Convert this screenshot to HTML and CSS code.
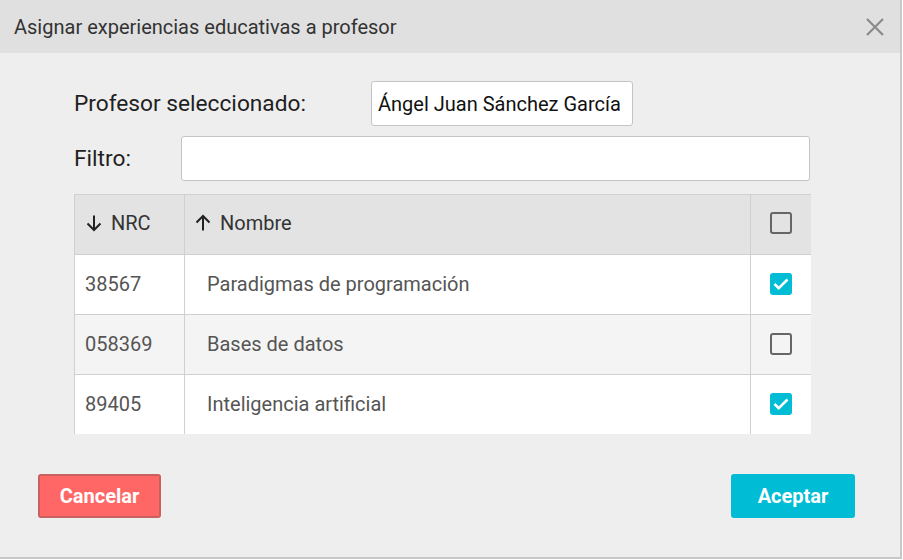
FILE: index.html
```html
<!DOCTYPE html>
<html lang="es">
<head>
<meta charset="utf-8">
<title>Asignar experiencias educativas a profesor</title>
<link rel="stylesheet" href="styles.css">
</head>
<body>
<div class="dialog">
  <div class="titlebar">
    <span class="title">Asignar experiencias educativas a profesor</span>
    <svg class="close" width="20" height="20" viewBox="0 0 20 20"><path d="M2 2 L18 18 M18 2 L2 18" stroke="#8a8a8a" stroke-width="2.2" fill="none"/></svg>
  </div>
  <div class="content">
    <div class="row row-prof">
      <label class="label">Profesor seleccionado:</label>
      <div class="input input-prof">Ángel Juan Sánchez García</div>
    </div>
    <div class="row row-filter">
      <label class="label">Filtro:</label>
      <div class="input input-filter"></div>
    </div>
    <div class="table">
      <div class="tr thead">
        <div class="td c-nrc"><svg class="arrow" width="18" height="18" viewBox="0 0 18 18"><path d="M9 1.5 V16 M2.5 9.5 L9 16 L15.5 9.5" stroke="#222" stroke-width="2" fill="none"/></svg>NRC</div>
        <div class="td c-name"><svg class="arrow" width="18" height="18" viewBox="0 0 18 18"><path d="M9 16.5 V2 M2.5 8.5 L9 2 L15.5 8.5" stroke="#222" stroke-width="2" fill="none"/></svg>Nombre</div>
        <div class="td c-chk"><span class="cb"></span></div>
      </div>
      <div class="tr">
        <div class="td c-nrc">38567</div>
        <div class="td c-name pad">Paradigmas de programación</div>
        <div class="td c-chk"><span class="cb on"><svg width="22" height="22" viewBox="0 0 22 22"><path d="M4.5 11 L8.7 15.2 L17.5 6.5" stroke="#fff" stroke-width="2.6" fill="none"/></svg></span></div>
      </div>
      <div class="tr alt">
        <div class="td c-nrc">058369</div>
        <div class="td c-name pad">Bases de datos</div>
        <div class="td c-chk"><span class="cb"></span></div>
      </div>
      <div class="tr">
        <div class="td c-nrc">89405</div>
        <div class="td c-name pad">Inteligencia artificial</div>
        <div class="td c-chk"><span class="cb on"><svg width="22" height="22" viewBox="0 0 22 22"><path d="M4.5 11 L8.7 15.2 L17.5 6.5" stroke="#fff" stroke-width="2.6" fill="none"/></svg></span></div>
      </div>
    </div>
  </div>
  <div class="footer">
    <button class="btn btn-cancel">Cancelar</button>
    <button class="btn btn-ok">Aceptar</button>
  </div>
</div>
</body>
</html>
```
FILE: styles.css
```css
* { box-sizing: border-box; }
html, body { margin: 0; padding: 0; background: #ffffff; }
body { font-family: Roboto, "Liberation Sans", sans-serif; }

.dialog {
  width: 902px;
  height: 559px;
  background: #eeeeee;
  border-right: 2px solid #c8c8c8;
  border-bottom: 2px solid #c8c8c8;
  display: flex;
  flex-direction: column;
}

.titlebar {
  height: 53px;
  background: #e0e0e0;
  display: flex;
  align-items: center;
  justify-content: space-between;
  padding: 0 15px 0 14px;
}
.title { font-size: 20px; color: #333333; }
.close { display: block; }

.content {
  padding: 28px 90px 0 74px;
  display: flex;
  flex-direction: column;
}
.row { display: flex; align-items: center; }
.row-prof { height: 45px; }
.row-filter { height: 45px; margin-top: 10px; }
.label { font-size: 22.7px; color: #1f1f1f; }
.row-prof .label { width: 297px; }
.row-filter .label { width: 107px; }
.input {
  height: 45px;
  background: #ffffff;
  border: 1px solid #c4c4c4;
  border-radius: 3px;
  font-size: 20px;
  color: #111;
  display: flex;
  align-items: center;
  padding: 0 6px;
}
.input-prof { width: 262px; }
.input-filter { flex: 1; }

.table {
  margin-top: 13px;
  border-left: 1px solid #d0d0d0;
  border-top: 1px solid #d0d0d0;
  width: 737px;
}
.tr { display: flex; height: 60px; background: #ffffff; border-bottom: 1px solid #d0d0d0; }
.tr:last-child { border-bottom: 0; height: 59px; }
.tr.alt { background: #f4f4f4; }
.thead { background: #e3e3e3; height: 60px; }
.td { display: flex; align-items: center; font-size: 20px; color: #555555; padding-bottom: 2px; }
.thead .td { color: #333333; padding-bottom: 3px; }
.c-nrc { width: 110px; padding-left: 10px; border-right: 1px solid #d0d0d0; }
.c-name { width: 566px; padding-left: 9px; border-right: 1px solid #d0d0d0; }
.c-name.pad { padding-left: 22px; }
.c-chk { flex: 1; justify-content: center; }
.arrow { margin-right: 8px; }

.cb {
  width: 22px;
  height: 22px;
  border: 2px solid #666666;
  border-radius: 3px;
  display: block;
}
.cb.on { background: #00bcd4; border: 0; }
.cb svg { display: block; }

.footer {
  margin-top: 40px;
  display: flex;
  justify-content: space-between;
  padding: 0 45px 0 38px;
}
.btn {
  height: 44px;
  border-radius: 3px;
  font-family: Roboto, "Liberation Sans", sans-serif;
  font-size: 20px;
  font-weight: bold;
  color: #ffffff;
  cursor: pointer;
}
.btn-cancel { width: 123px; background: #ff6666; border: 2px solid #c86060; }
.btn-ok { width: 124px; background: #00bcd4; border: 0; }
```
